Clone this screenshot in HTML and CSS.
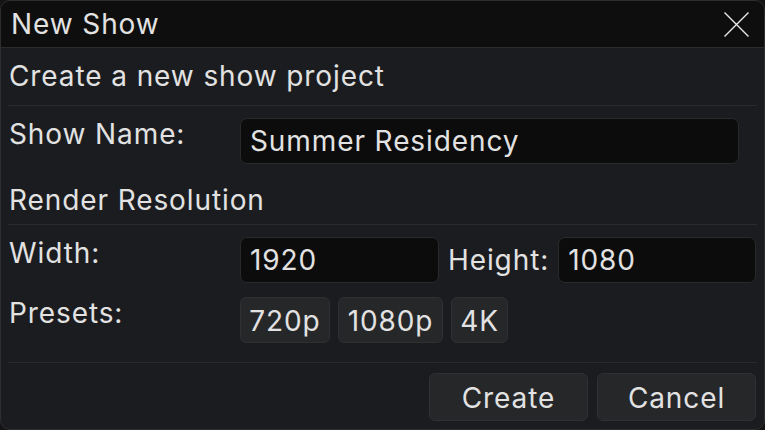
FILE: index.html
```html
<!DOCTYPE html>
<html>
<head>
<meta charset="utf-8">
<link rel="stylesheet" href="styles.css">
</head>
<body>
<div class="window">
  <div class="titlebar">
    <span class="title">New Show</span>
    <svg class="close" width="25" height="25" viewBox="0 0 25 25"><path d="M0.5 0.5 L24.5 24.5 M24.5 0.5 L0.5 24.5" stroke="#e8e8e8" stroke-width="1.4" fill="none"/></svg>
  </div>
  <div class="content">
    <div class="desc">Create a new show project</div>
    <div class="sep"></div>
    <div class="row row-name">
      <div class="label">Show Name:</div>
      <div class="input input-name">Summer Residency</div>
    </div>
    <div class="section">Render Resolution</div>
    <div class="sep sep-2"></div>
    <div class="row row-size">
      <div class="label">Width:</div>
      <div class="input input-num">1920</div>
      <div class="label label-inline">Height:</div>
      <div class="input input-h">1080</div>
    </div>
    <div class="row row-presets">
      <div class="label">Presets:</div>
      <div class="presets">
        <div class="btn btn-small w720">720p</div>
        <div class="btn btn-small w1080">1080p</div>
        <div class="btn btn-small w4k">4K</div>
      </div>
    </div>
    <div class="sep sep-3"></div>
    <div class="actions">
      <div class="btn btn-big">Create</div>
      <div class="btn btn-big">Cancel</div>
    </div>
  </div>
</div>
</body>
</html>
```

FILE: styles.css
```css
html, body {
  margin: 0;
  padding: 0;
  background: #141414;
}
body {
  font-family: Inter, "Noto Sans", sans-serif;
  font-size: 28px;
  letter-spacing: 0.9px;
  color: #e2e2e2;
}
.window {
  box-sizing: border-box;
  width: 765px;
  height: 430px;
  border: 1px solid #2e2e30;
  border-radius: 10px;
  background: #1b1c1f;
  overflow: hidden;
}
.titlebar {
  box-sizing: border-box;
  height: 47px;
  background: #0e0e0e;
  border-bottom: 1px solid #2b2c2f;
  display: flex;
  align-items: center;
  padding-left: 10px;
  padding-right: 15px;
}
.title {
  line-height: 33px;
  margin-top: 1px;
}
.close {
  margin-left: auto;
  margin-top: 1px;
  display: block;
}
.content {
  padding: 0 7px;
}
.desc {
  margin-top: 12px;
  line-height: 33px;
  padding-left: 1px;
}
.sep {
  height: 1px;
  background: #2a2b2e;
  margin-top: 12px;
}
.row {
  display: flex;
  align-items: flex-start;
}
.label {
  width: 232px;
  flex: none;
  line-height: 33px;
  padding-left: 1px;
  box-sizing: border-box;
}
.input {
  box-sizing: border-box;
  height: 46px;
  background: #0c0c0c;
  border: 1px solid #2a2a2c;
  border-radius: 7px;
  padding-left: 9px;
  line-height: 44px;
}
.row-name {
  margin-top: 12px;
}
.input-name {
  width: 499px;
}
.section {
  margin-top: 20px;
  line-height: 33px;
  padding-left: 1px;
}
.sep-2 {
  margin-top: 7px;
}
.row-size {
  margin-top: 12px;
  padding-right: 1px;
}
.input-num {
  width: 199px;
}
.label-inline {
  width: auto;
  margin-left: 9px;
  margin-right: 9px;
  padding-left: 0;
  line-height: 46px;
}
.input-h {
  flex: 1;
}
.row-presets {
  margin-top: 14px;
}
.presets {
  display: flex;
  gap: 8px;
}
.btn {
  box-sizing: border-box;
  background: #262729;
  border: 1px solid #2f3033;
  border-radius: 6px;
  text-align: center;
}
.btn-small {
  height: 46px;
  line-height: 46px;
}
.w720 { width: 90px; }
.w1080 { width: 105px; }
.w4k { width: 57px; }
.sep-3 {
  margin-top: 19px;
}
.actions {
  display: flex;
  justify-content: flex-end;
  gap: 9px;
  margin-top: 10px;
  padding-right: 1px;
}
.btn-big {
  width: 159px;
  height: 48px;
  line-height: 48px;
}
```
